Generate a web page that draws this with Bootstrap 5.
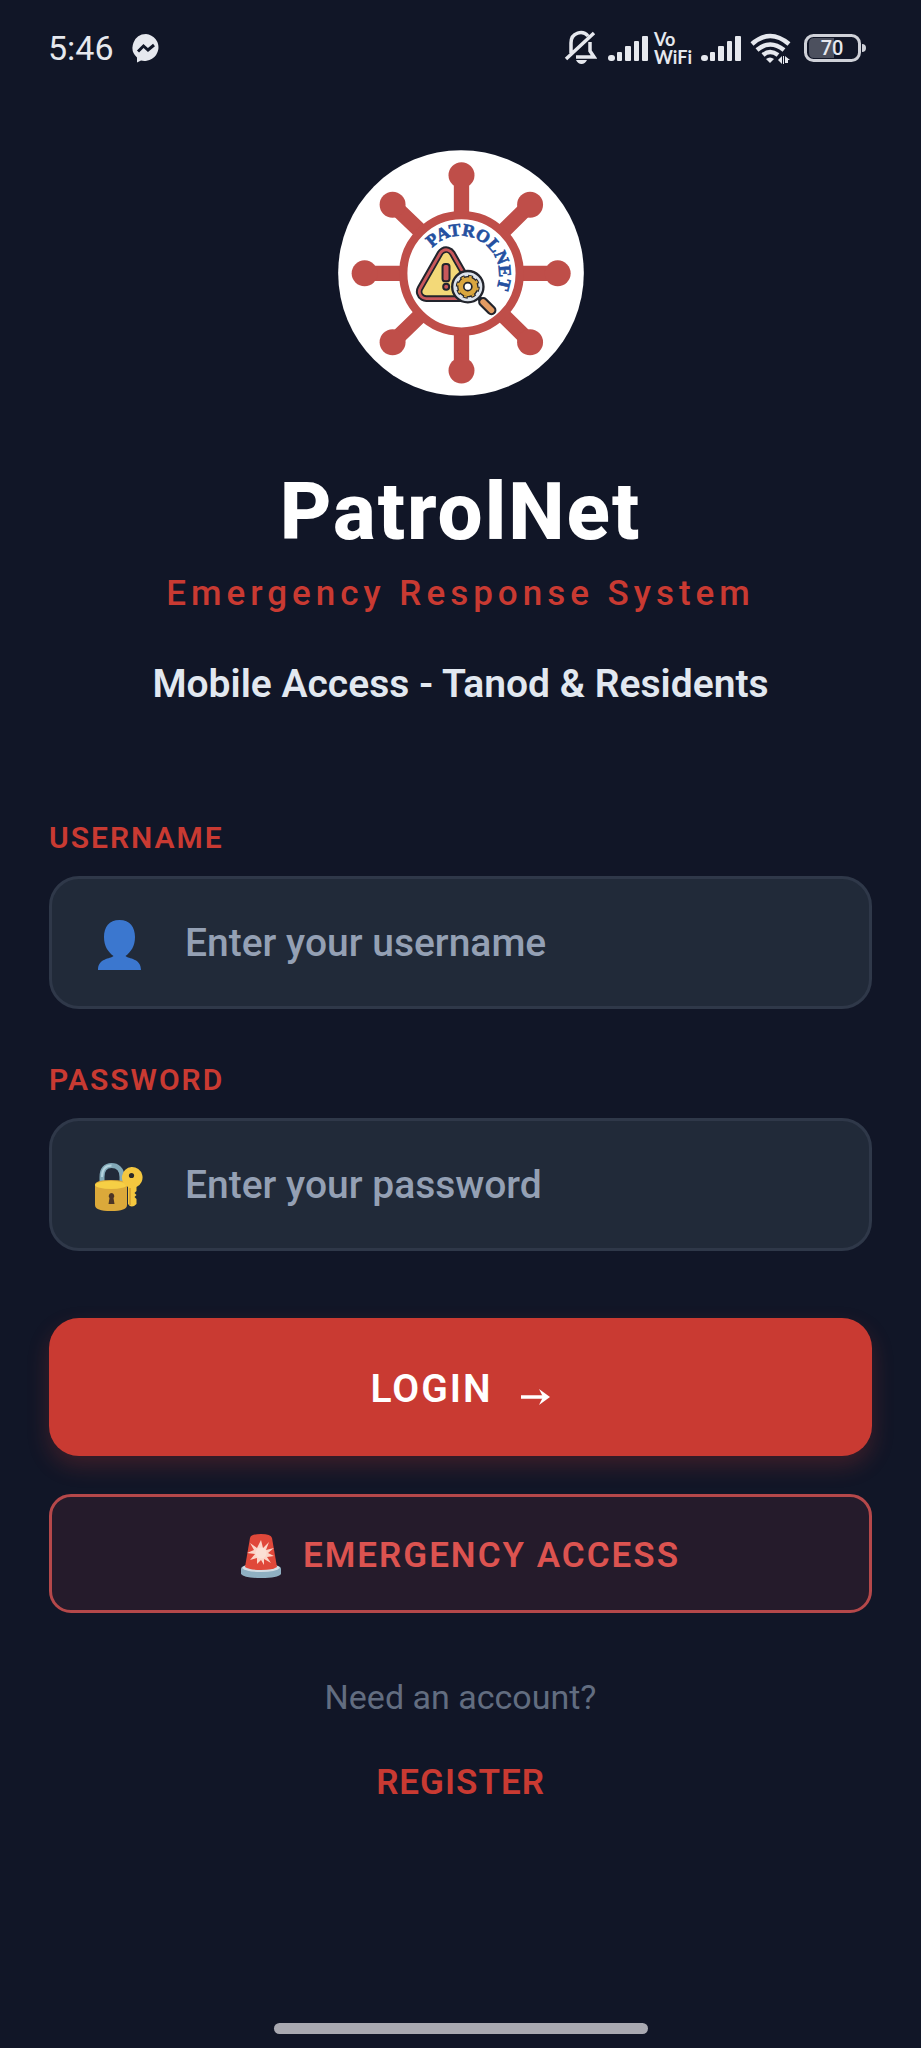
<!DOCTYPE html>
<html lang="en" data-bs-theme="dark">
<head>
<meta charset="utf-8">
<meta name="viewport" content="width=device-width, initial-scale=1">
<title>PatrolNet</title>
<link href="https://cdn.jsdelivr.net/npm/bootstrap@5.3.0/dist/css/bootstrap.min.css" rel="stylesheet">
<style>
  :root { --pn-red: #c93a32; --pn-bg: #111627; }
  body { background: var(--pn-bg); font-family: Roboto, "Liberation Sans", sans-serif; }
  svg { display: block; flex: none; }
  .status-bar { height: 96px; padding: 0 55px 0 48px; color: #e6e8ee; font-size: 34px; line-height: 40px; }
  .messenger { margin-left: 18px; }
  .signal { margin-left: 8px; }
  .bell { margin-right: 2px; }
  .battery { margin-left: 12px; }
  .vowifi { margin-left: 5px; font: 700 18px/18px Lato, sans-serif; }
  .screen { padding: 54px 49px 0; }
  .app-logo { width: 246px; height: 246px; }
  .app-name { margin: 70px 0 16px; font-size: 80px; line-height: 92px; font-weight: 800; letter-spacing: 2px; color: #fff; }
  .tagline { margin: 0 0 46px; font-size: 35px; line-height: 40px; font-weight: 500; letter-spacing: 5px; color: var(--pn-red); }
  .audience { margin: 0 0 112px; font-size: 39px; line-height: 48px; font-weight: 600; color: #e2e8f0; }
  .field-label { margin-bottom: 20px; font-size: 30px; line-height: 36px; font-weight: 600; letter-spacing: 2px; color: var(--pn-red); }
  .field-box { height: 133px; padding: 0 43px; gap: 42px; background: #212a39; border: 3px solid #2f3849; border-radius: 30px; margin-bottom: 53px; }
  .field-box .icon-slot { width: 48px; flex: none; padding-top: 4px; }
  .field-box .form-control { font-size: 39px; line-height: 48px; font-weight: 500; color: #e2e8f0; }
  .field-box .form-control::placeholder { color: #94a0b4; opacity: 1; }
  .btn-login { height: 138px; margin: 14px 0 38px; padding: 4px 0 0; gap: 28px; border: 0; border-radius: 30px; background: var(--pn-red); color: #fff; font-size: 39px; line-height: 48px; font-weight: 600; letter-spacing: 2px; box-shadow: 0 10px 22px rgba(201, 58, 50, .24); }
  .btn-emergency { height: 119px; padding: 4px 0 0; gap: 22px; border: 3px solid #b5484a; border-radius: 22px; background: #251b2b; color: #dc5350; font-size: 35px; line-height: 44px; font-weight: 600; letter-spacing: 2px; }
  .hint { margin: 64px 0 46px; font-size: 34px; line-height: 40px; color: #626d80; }
  .register-link { font-size: 35px; line-height: 40px; font-weight: 600; letter-spacing: 1px; color: var(--pn-red); }
  .home-bar { width: 374px; height: 11px; margin-bottom: 14px; background: #a9a9b1; }
</style>
</head>
<body class="min-vh-100 d-flex flex-column">

<header class="status-bar d-flex align-items-center justify-content-between">
  <div class="d-flex align-items-center">
    <time>5:46</time>
    <svg class="messenger" width="28" height="29" viewBox="0 0 28 29" aria-hidden="true">
      <path fill="#e6e8ee" d="M14 0a14 13.500 0 1 1-5 26.500L5 28.500V23.500A13.500 13.500 0 0 1 14 0z"/>
      <path fill="none" stroke="#111627" stroke-width="3" d="M6 17.500 11.500 12l4.500 4 6-5"/>
    </svg>
  </div>
  <div class="d-flex align-items-center">
    <svg class="bell" width="33" height="36" viewBox="0 0 33 36" fill="none" stroke="#e6e8ee" stroke-width="3.500" aria-hidden="true">
      <path d="M7 23V13C7 2 19 0 24 6M26 12v9l4 6H12M2 29 30 3"/>
      <path fill="#e6e8ee" stroke="none" d="M12 30h11q-2 4-5.500 4T12 30z"/>
    </svg>
    <svg class="signal" width="42" height="28" viewBox="0 0 42 28" fill="#e6e8ee" aria-hidden="true">
      <rect x="1" y="21" width="7" height="6" rx="3"/><rect x="10" y="18" width="5" height="9" rx="1"/><rect x="18" y="12" width="6" height="15" rx="1"/><rect x="27" y="7" width="5" height="20" rx="1"/><rect x="35" y="2" width="6" height="25" rx="1"/>
    </svg>
    <div class="vowifi">Vo<br>WiFi</div>
    <svg class="signal" width="42" height="28" viewBox="0 0 42 28" fill="#e6e8ee" aria-hidden="true">
      <rect x="1" y="21" width="7" height="6" rx="3"/><rect x="10" y="18" width="5" height="9" rx="1"/><rect x="18" y="12" width="6" height="15" rx="1"/><rect x="27" y="7" width="5" height="20" rx="1"/><rect x="35" y="2" width="6" height="25" rx="1"/>
    </svg>
    <svg class="signal" width="42" height="31" viewBox="0 0 42 31" fill="none" stroke="#e6e8ee" stroke-width="4.500" aria-hidden="true">
      <path d="M2 11Q20-5 39 11M7 17q13-11 27 0M13 22q7-6 15 0"/>
      <path fill="#e6e8ee" stroke="none" d="M16 26q4-3 8 0l-4 4zM28 27l4-4v8zM35 23l5 4h-2v3h-3zM33 23h1v8h-1z"/>
    </svg>
    <svg class="battery" width="62" height="28" viewBox="0 0 62 28" aria-label="Battery 70 percent">
      <rect x="1.500" y="1.500" width="54" height="25" rx="8" fill="none" stroke="#cfd1d8" stroke-width="3"/>
      <path fill="#4c505e" d="M10 4h20v20H10q-5 0-5-5V9q0-5 5-5z"/>
      <path fill="#cfd1d8" d="M58 10q4 0 4 4t-4 4z"/>
      <text x="28" y="21" text-anchor="middle" font-family="Roboto, sans-serif" font-size="20" font-weight="500" fill="#e6e8ee">70</text>
    </svg>
  </div>
</header>

<main class="screen d-flex flex-column">
  <div class="text-center">
    <svg class="app-logo mx-auto" viewBox="53 60 739 738" role="img" aria-label="PatrolNet logo">
      <circle cx="422.500" cy="429" r="369" fill="#fff"/>
      <g stroke="#bf4e49" stroke-width="46" fill="none">
        <path d="M424 135V255M424 605V721M132 430H250M600 430H713M217 223 300 303M631 223 550 303M217 637 300 557M631 637 550 557"/>
        <circle cx="424" cy="430" r="175" stroke-width="25"/>
      </g>
      <g fill="#bf4e49">
        <circle cx="424" cy="135" r="39"/><circle cx="424" cy="722" r="39"/><circle cx="133" cy="430" r="39"/><circle cx="713" cy="430" r="39"/>
        <circle cx="217" cy="224" r="39"/><circle cx="630" cy="224" r="39"/><circle cx="217" cy="637" r="39"/><circle cx="630" cy="637" r="39"/>
      </g>
      <path id="nameArc" fill="none" d="M336 354A116 116 0 1 1 506 512"/>
      <text font-family="Liberation Serif, serif" font-weight="700" font-size="53" fill="#2450a0" stroke="#2450a0" stroke-width="2"><textPath href="#nameArc">PATROLNET</textPath></text>
      <g stroke-linejoin="round">
        <path d="M378 380 318 485H438z" fill="#22242c" stroke="#22242c" stroke-width="62"/>
        <path d="M378 380 318 485H438z" fill="none" stroke="#c9585b" stroke-width="50"/>
        <path d="M378 380 318 485H438z" fill="none" stroke="#22242c" stroke-width="33"/>
        <path d="M378 380 318 485H438z" fill="#f3d978" stroke="#f3d978" stroke-width="22"/>
      </g>
      <g fill="#c9585b" stroke="#22242c" stroke-width="6">
        <rect x="367" y="402" width="21" height="52" rx="8"/><circle cx="378" cy="470" r="9"/>
      </g>
      <g stroke-linecap="round">
        <path stroke="#22242c" stroke-width="14" d="M470 498 490 518"/>
        <path stroke="#22242c" stroke-width="30" d="M489 516 514 541"/>
        <path stroke="#e39b62" stroke-width="17" d="M489 516 514 541"/>
      </g>
      <circle cx="443" cy="470" r="47" fill="#dde3ec" stroke="#22242c" stroke-width="7"/>
      <circle cx="443" cy="470" r="23" fill="none" stroke="#22242c" stroke-width="18"/>
      <circle cx="443" cy="470" r="31" fill="none" stroke="#22242c" stroke-width="10" stroke-dasharray="14 10.350"/>
      <circle cx="443" cy="470" r="30" fill="none" stroke="#d9a63f" stroke-width="6" stroke-dasharray="8 15.560" stroke-dashoffset="-3"/>
      <circle cx="443" cy="470" r="21" fill="none" stroke="#d9a63f" stroke-width="15"/>
      <circle cx="443" cy="470" r="12" fill="#fff" stroke="#22242c" stroke-width="5"/>
    </svg>
    <h1 class="app-name">PatrolNet</h1>
    <p class="tagline">Emergency Response System</p>
    <p class="audience">Mobile Access - Tanod &amp; Residents</p>
  </div>

  <form class="d-flex flex-column">
    <label class="field-label" for="username">USERNAME</label>
    <div class="field-box d-flex align-items-center">
      <span class="icon-slot d-flex justify-content-center">
        <svg width="43" height="50" viewBox="0 0 43 50" fill="#3b77cf" aria-hidden="true">
          <path d="M21.500 0C32 0 37 7 37 17c0 9-4 15-9.500 19 3 3 15.500 2 15.500 14H0c0-12 12.500-11 15.500-14C10 32 6 26 6 17 6 7 11 0 21.500 0z"/>
        </svg>
      </span>
      <input class="form-control border-0 bg-transparent shadow-none p-0" id="username" type="text" placeholder="Enter your username">
    </div>

    <label class="field-label" for="password">PASSWORD</label>
    <div class="field-box d-flex align-items-center">
      <span class="icon-slot d-flex justify-content-center">
        <svg width="48" height="48" viewBox="0 0 48 48" aria-hidden="true">
          <path d="M7 23V14C7 6 11 2.500 16.500 2.500S27 6 27 14V23" fill="none" stroke="#82a9b8" stroke-width="5"/>
          <path d="M7 14C7 6 11 2.500 16.500 2.500" fill="none" stroke="#b4d3de" stroke-width="2"/>
          <path d="M0 22q0-5 16-5t16 5v20q0 6-16 6T0 42z" fill="#dba93a"/>
          <ellipse cx="16" cy="22" rx="16" ry="4" fill="#f6cf45"/>
          <path d="M16.500 30a3 3 0 0 1 2 5l1 6h-6l1-6a3 3 0 0 1 2-5z" fill="#4b3526"/>
          <path fill="#f4c73f" d="M36.500 4a10.500 10.500 0 0 1 5 20v4l-2 2 2 2-2 2 2 2v5q-5 5-8.500 0V24a10.500 10.500 0 0 1 3.500-20z"/>
          <path stroke="#d39c30" stroke-width="1.500" d="M35 25v17"/>
          <circle cx="36.500" cy="12.500" r="2.600" fill="#2c2a28"/>
        </svg>
      </span>
      <input class="form-control border-0 bg-transparent shadow-none p-0" id="password" type="password" placeholder="Enter your password">
    </div>

    <button type="submit" class="btn btn-login d-flex align-items-center justify-content-center">
      <span>LOGIN</span>
      <svg class="mt-3" width="30" height="16" viewBox="0 0 30 16" aria-hidden="true"><path fill="none" stroke="#fff" stroke-width="3.500" d="M0 8H24"/><path fill="#fff" d="m18 0 11 8-11 8 4-8z"/></svg>
    </button>
    <button type="button" class="btn btn-emergency d-flex align-items-center justify-content-center">
      <svg width="40" height="44" viewBox="0 0 40 44" aria-hidden="true">
        <path d="M0 35q0-5 20-5t20 5v5q-3 4-20 4T0 40z" fill="#8fb0c2"/>
        <path d="M1 34q2-4 19-4t19 4q-4 4-19 4T1 34z" fill="#d3dde4"/>
        <path d="M9 4q1-4 11-4t11 4l5 29q-4 3-16 3T4 33z" fill="#e0483a"/>
        <path fill="#fbd5c8" d="m20 6 2 8 6-6-3 8 8-2-6 5 6 3-7 1 4 6-7-4 0 6-3-5-4 4 0-6-7 2 5-6-8-1 7-3-4-7 7 5z"/>
        <circle cx="20" cy="19" r="5.500" fill="#fbe0d5"/>
      </svg>
      <span>EMERGENCY ACCESS</span>
    </button>
  </form>

  <p class="hint text-center">Need an account?</p>
  <a class="register-link align-self-center text-decoration-none" href="#register">REGISTER</a>
</main>

<div class="home-bar rounded-pill mx-auto mt-auto"></div>

<script src="https://cdn.jsdelivr.net/npm/bootstrap@5.3.0/dist/js/bootstrap.bundle.min.js"></script>
</body>
</html>
